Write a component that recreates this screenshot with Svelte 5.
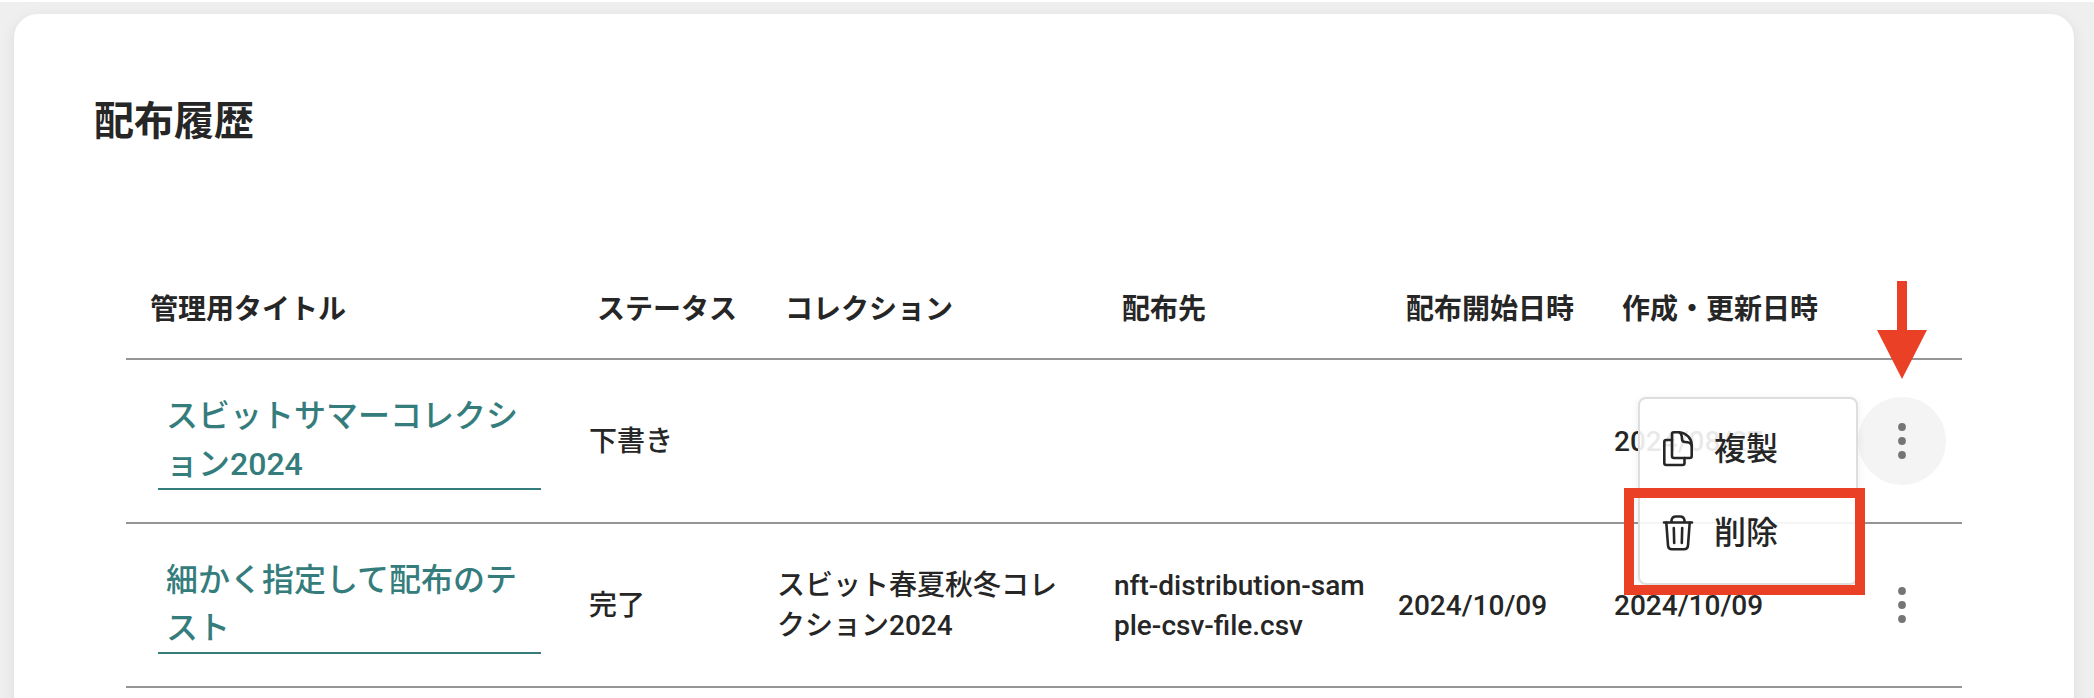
<script>
  const columns = ['管理用タイトル', 'ステータス', 'コレクション', '配布先', '配布開始日時', '作成・更新日時', ''];

  const rows = [
    {
      title: 'スビットサマーコレクション2024',
      status: '下書き',
      collection: '',
      target: '',
      startedAt: '',
      updatedAt: '2024/08/27',
    },
    {
      title: '細かく指定して配布のテスト',
      status: '完了',
      collection: 'スビット春夏秋冬コレクション2024',
      target: 'nft-distribution-sample-csv-file.csv',
      startedAt: '2024/10/09',
      updatedAt: '2024/10/09',
    },
  ];

  let openRow = $state(0);

  const toggle = (i) => {
    openRow = openRow === i ? -1 : i;
  };
</script>

<main>
  <section class="card">
    <h1>配布履歴</h1>

    <table>
      <colgroup>
        <col class="c-title" />
        <col class="c-status" />
        <col class="c-collection" />
        <col class="c-target" />
        <col class="c-start" />
        <col class="c-updated" />
        <col class="c-action" />
      </colgroup>
      <thead>
        <tr>
          {#each columns as column}
            <th>{column}</th>
          {/each}
        </tr>
      </thead>
      <tbody>
        {#each rows as row, i}
          <tr>
            <td class="title"><a href="#detail">{row.title}</a></td>
            <td>{row.status}</td>
            <td>{row.collection}</td>
            <td>{row.target}</td>
            <td>{row.startedAt}</td>
            <td>{row.updatedAt}</td>
            <td class="action">
              <div class="anchor">
                <button class="more" class:open={openRow === i} aria-label="メニュー" onclick={() => toggle(i)}>
                  <svg width="8" height="36" viewBox="0 0 8 36" fill="#757575">
                    <circle cx="4" cy="4" r="3.9" />
                    <circle cx="4" cy="18" r="3.9" />
                    <circle cx="4" cy="32" r="3.9" />
                  </svg>
                </button>
                {#if openRow === i}
                  <div class="menu">
                    <div class="item">
                      <svg width="32" height="38" viewBox="0 0 32 38">
                        <path d="M12 2.300H17C25 3 29.700 9 29.700 15V26Q29.700 28 27.700 28H12Q10 28 10 26V4.300Q10 2.300 12 2.300Z" />
                        <path d="M17.500 2.500C20 4 20 6 20 9Q20 12 23 12C26 12 28.500 12.500 29.500 15" />
                        <path d="M10 10H4.300Q2.300 10 2.300 12V33Q2.300 35 4.300 35H20.500Q22.500 35 22.500 33V28" />
                      </svg>
                      複製
                    </div>
                    <div class="item">
                      <svg width="32" height="38" viewBox="0 0 32 38">
                        <path d="M2 8.500H30M9.500 8.500V6.500Q10 2.500 14 2.500H18Q22 2.500 22.500 6.500V8.500" />
                        <path d="M4.300 8.500L6 31.500Q6.300 35.300 10 35.300H22Q25.700 35.300 26 31.500L27.700 8.500M11.800 14L12.200 29M20.200 14L19.800 29" />
                      </svg>
                      削除
                    </div>
                    <div class="highlight"></div>
                  </div>
                  <svg class="arrow" width="50" height="98" viewBox="0 0 50 98">
                    <path d="M20 0H30V49H50L25 98L0 49H20Z" />
                  </svg>
                {/if}
              </div>
            </td>
          </tr>
        {/each}
      </tbody>
    </table>
  </section>
</main>

<style>
  :global(body) {
    margin: 0;
    background: #efefef;
  }

  main {
    box-sizing: border-box;
    height: 698px;
    overflow: hidden;
    border-top: 2px solid #fff;
    padding: 12px 20px 0 14px;
    background: #efefef;
    color: #262626;
    font-family: Roboto, 'Noto Sans CJK JP', sans-serif;
    font-weight: 500;
  }

  .card {
    box-sizing: border-box;
    height: 760px;
    border-radius: 24px;
    padding: 78px 112px 0;
    background: #fff;
    box-shadow: 0 4px 16px rgba(0, 0, 0, 0.08);
  }

  h1 {
    margin: 0 0 108px -32px;
    font-size: 40px;
    line-height: 60px;
    font-weight: 700;
  }

  table {
    width: 1836px;
    table-layout: fixed;
    border-spacing: 0;
    font-size: 28px;
    line-height: 40px;
  }

  .c-title {
    width: 447px;
  }

  .c-status {
    width: 188px;
  }

  .c-collection {
    width: 337px;
  }

  .c-target {
    width: 284px;
  }

  .c-start {
    width: 216px;
  }

  .c-updated {
    width: 244px;
  }

  .c-action {
    width: 120px;
  }

  th,
  td {
    box-sizing: border-box;
    border-bottom: 2px solid #959595;
    text-align: left;
    vertical-align: middle;
  }

  th {
    height: 100px;
    padding: 2px 0 0 24px;
    font-weight: 700;
    white-space: nowrap;
  }

  td {
    height: 164px;
    padding: 2px 16px 0;
    word-break: break-all;
  }

  .title {
    padding: 0 32px;
  }

  .action {
    padding: 0 16px;
  }

  a {
    display: block;
    border-bottom: 2px solid #357d7d;
    padding: 0 8px;
    color: #357d7d;
    font-size: 32px;
    line-height: 48px;
    text-decoration: none;
  }

  .anchor {
    position: relative;
    width: 88px;
    height: 88px;
  }

  .more {
    display: flex;
    align-items: center;
    justify-content: center;
    width: 88px;
    height: 88px;
    border: 0;
    border-radius: 50%;
    padding: 0;
    background: transparent;
  }

  .more.open {
    background: #f4f4f4;
  }

  .menu {
    position: absolute;
    top: 0;
    right: 88px;
    z-index: 1;
    box-sizing: border-box;
    width: 220px;
    height: 188px;
    border: 2px solid #dedede;
    border-radius: 8px;
    padding: 8px 0 0 22px;
    background: rgba(255, 255, 255, 0.9);
    box-shadow: 0 2px 8px rgba(0, 0, 0, 0.08);
  }

  .item {
    display: flex;
    align-items: center;
    gap: 20px;
    height: 84px;
    font-size: 32px;
    line-height: 48px;
  }

  .item svg {
    fill: none;
    stroke: #262626;
    stroke-width: 2.6;
    stroke-linecap: round;
    stroke-linejoin: round;
  }

  .highlight {
    position: absolute;
    top: 89px;
    left: -16px;
    box-sizing: border-box;
    width: 241px;
    height: 107px;
    border: 10px solid #ea4025;
  }

  .arrow {
    position: absolute;
    top: -116px;
    left: 19px;
    fill: #ea4025;
  }
</style>
